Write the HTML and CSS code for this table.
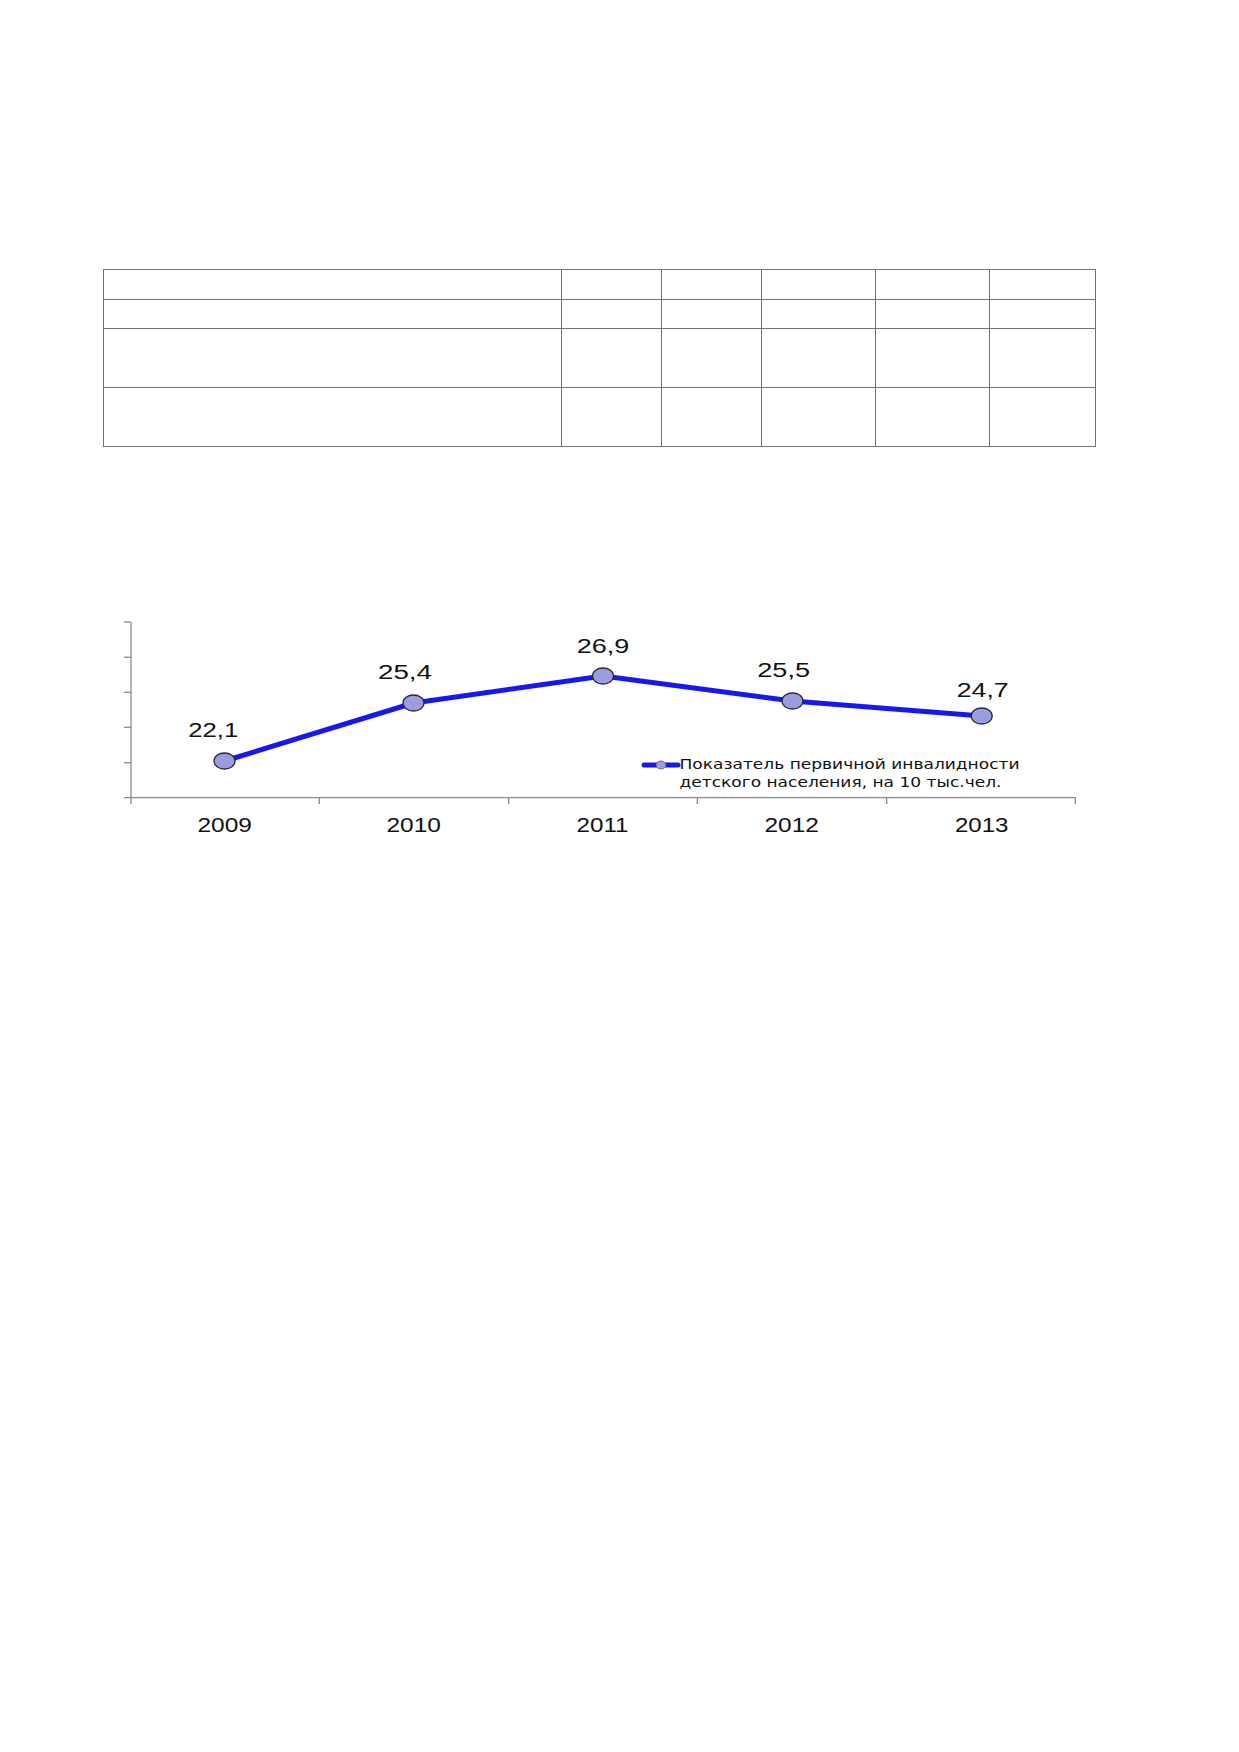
FILE: index.html
```html
<!DOCTYPE html>
<html lang="ru">
<head>
<meta charset="utf-8">
<title>Показатель первичной инвалидности</title>
<link rel="stylesheet" href="styles.css">
</head>
<body>
<div class="page">
  <table class="grid">
    <colgroup>
      <col class="c-name"><col class="c-y"><col class="c-y"><col class="c-y2"><col class="c-y2"><col class="c-y3">
    </colgroup>
    <tr class="r-short"><td></td><td></td><td></td><td></td><td></td><td></td></tr>
    <tr class="r-short"><td></td><td></td><td></td><td></td><td></td><td></td></tr>
    <tr class="r-tall"><td></td><td></td><td></td><td></td><td></td><td></td></tr>
    <tr class="r-tall"><td></td><td></td><td></td><td></td><td></td><td></td></tr>
  </table>

  <svg class="chart" viewBox="0 600 1239 250" width="1239" height="250" xmlns="http://www.w3.org/2000/svg">
    <g class="axis">
      <line x1="131" y1="622" x2="131" y2="804"/>
      <line x1="124" y1="622" x2="131" y2="622"/>
      <line x1="124" y1="657.3" x2="131" y2="657.3"/>
      <line x1="124" y1="692.3" x2="131" y2="692.3"/>
      <line x1="124" y1="727.3" x2="131" y2="727.3"/>
      <line x1="124" y1="762.7" x2="131" y2="762.7"/>
      <line x1="124" y1="797.7" x2="1075.5" y2="797.7"/>
      <line x1="319.3" y1="797.7" x2="319.3" y2="804"/>
      <line x1="508.7" y1="797.7" x2="508.7" y2="804"/>
      <line x1="697.3" y1="797.7" x2="697.3" y2="804"/>
      <line x1="886.7" y1="797.7" x2="886.7" y2="804"/>
      <line x1="1075.3" y1="797.7" x2="1075.3" y2="804"/>
    </g>

    <polyline class="series" points="224.5,761 413.5,703 603,676 792.5,701 981.7,716"/>
    <g class="marker">
      <ellipse cx="224.5" cy="761" rx="10.5" ry="8"/>
      <ellipse cx="413.5" cy="703" rx="10.5" ry="8"/>
      <ellipse cx="603" cy="676" rx="10.5" ry="8"/>
      <ellipse cx="792.5" cy="701" rx="10.5" ry="8"/>
      <ellipse cx="981.7" cy="716" rx="10.5" ry="8"/>
    </g>

    <g class="value">
      <text x="188.3" y="736.7" textLength="50" lengthAdjust="spacingAndGlyphs">22,1</text>
      <text x="378" y="679" textLength="54" lengthAdjust="spacingAndGlyphs">25,4</text>
      <text x="576.7" y="652.7" textLength="52.6" lengthAdjust="spacingAndGlyphs">26,9</text>
      <text x="757.3" y="676.7" textLength="52.7" lengthAdjust="spacingAndGlyphs">25,5</text>
      <text x="956.7" y="697.3" textLength="52" lengthAdjust="spacingAndGlyphs">24,7</text>
    </g>

    <g class="year">
      <text x="197.5" y="831.7" textLength="54.5" lengthAdjust="spacingAndGlyphs">2009</text>
      <text x="386.5" y="831.7" textLength="54.5" lengthAdjust="spacingAndGlyphs">2010</text>
      <text x="576.5" y="831.7" textLength="52" lengthAdjust="spacingAndGlyphs">2011</text>
      <text x="764.5" y="831.7" textLength="54.5" lengthAdjust="spacingAndGlyphs">2012</text>
      <text x="955" y="831.7" textLength="53.5" lengthAdjust="spacingAndGlyphs">2013</text>
    </g>

    <g class="legend">
      <line class="legend-line" x1="644" y1="765" x2="678" y2="765"/>
      <ellipse class="legend-dot" cx="661" cy="765" rx="5" ry="4"/>
      <text x="679.5" y="769.3" textLength="340" lengthAdjust="spacingAndGlyphs">Показатель первичной инвалидности</text>
      <text x="679.5" y="787" textLength="322" lengthAdjust="spacingAndGlyphs">детского населения, на 10 тыс.чел.</text>
    </g>
  </svg>
</div>
</body>
</html>
```

FILE: styles.css
```css
html, body {
  margin: 0;
  padding: 0;
  background: #ffffff;
}

body {
  font-family: "Liberation Sans", Arial, sans-serif;
  color: #111111;
}

.page {
  width: 1239px;
  min-height: 1752px;
  padding-top: 269px;
  box-sizing: border-box;
}

.grid {
  margin-left: 103px;
  width: 992px;
  table-layout: fixed;
  border-collapse: collapse;
  border-top: 1.5px solid #1a1a1a;
}

.grid td {
  border: 1.5px solid #6f6f6f;
  padding: 0;
}

.grid .c-name { width: 458px; }
.grid .c-y { width: 100px; }
.grid .c-y2 { width: 114px; }
.grid .c-y3 { width: 106px; }

.grid .r-short td { height: 28.5px; }
.grid .r-tall td { height: 58px; }

.chart {
  display: block;
  margin-top: 153px;
}

.axis line {
  stroke: #8a8a8a;
  stroke-width: 1.3;
}

.series {
  fill: none;
  stroke: #1818ee;
  stroke-width: 5;
  stroke-linejoin: round;
}

.marker ellipse {
  fill: #9c9ce0;
  stroke: #2a2a3a;
  stroke-width: 1.3;
}

.value text {
  font-family: "Liberation Sans", Arial, sans-serif;
  font-size: 19.6px;
  fill: #111111;
}

.year text {
  font-family: "Liberation Sans", Arial, sans-serif;
  font-size: 20.3px;
  fill: #111111;
}

.legend text {
  font-family: "DejaVu Sans", Verdana, sans-serif;
  font-size: 13.5px;
  fill: #111111;
}

.legend-line {
  stroke: #1818ee;
  stroke-width: 5;
  stroke-linecap: round;
}

.legend-dot {
  fill: #9c9ce0;
  stroke: #555577;
  stroke-width: 0.8;
}
```
